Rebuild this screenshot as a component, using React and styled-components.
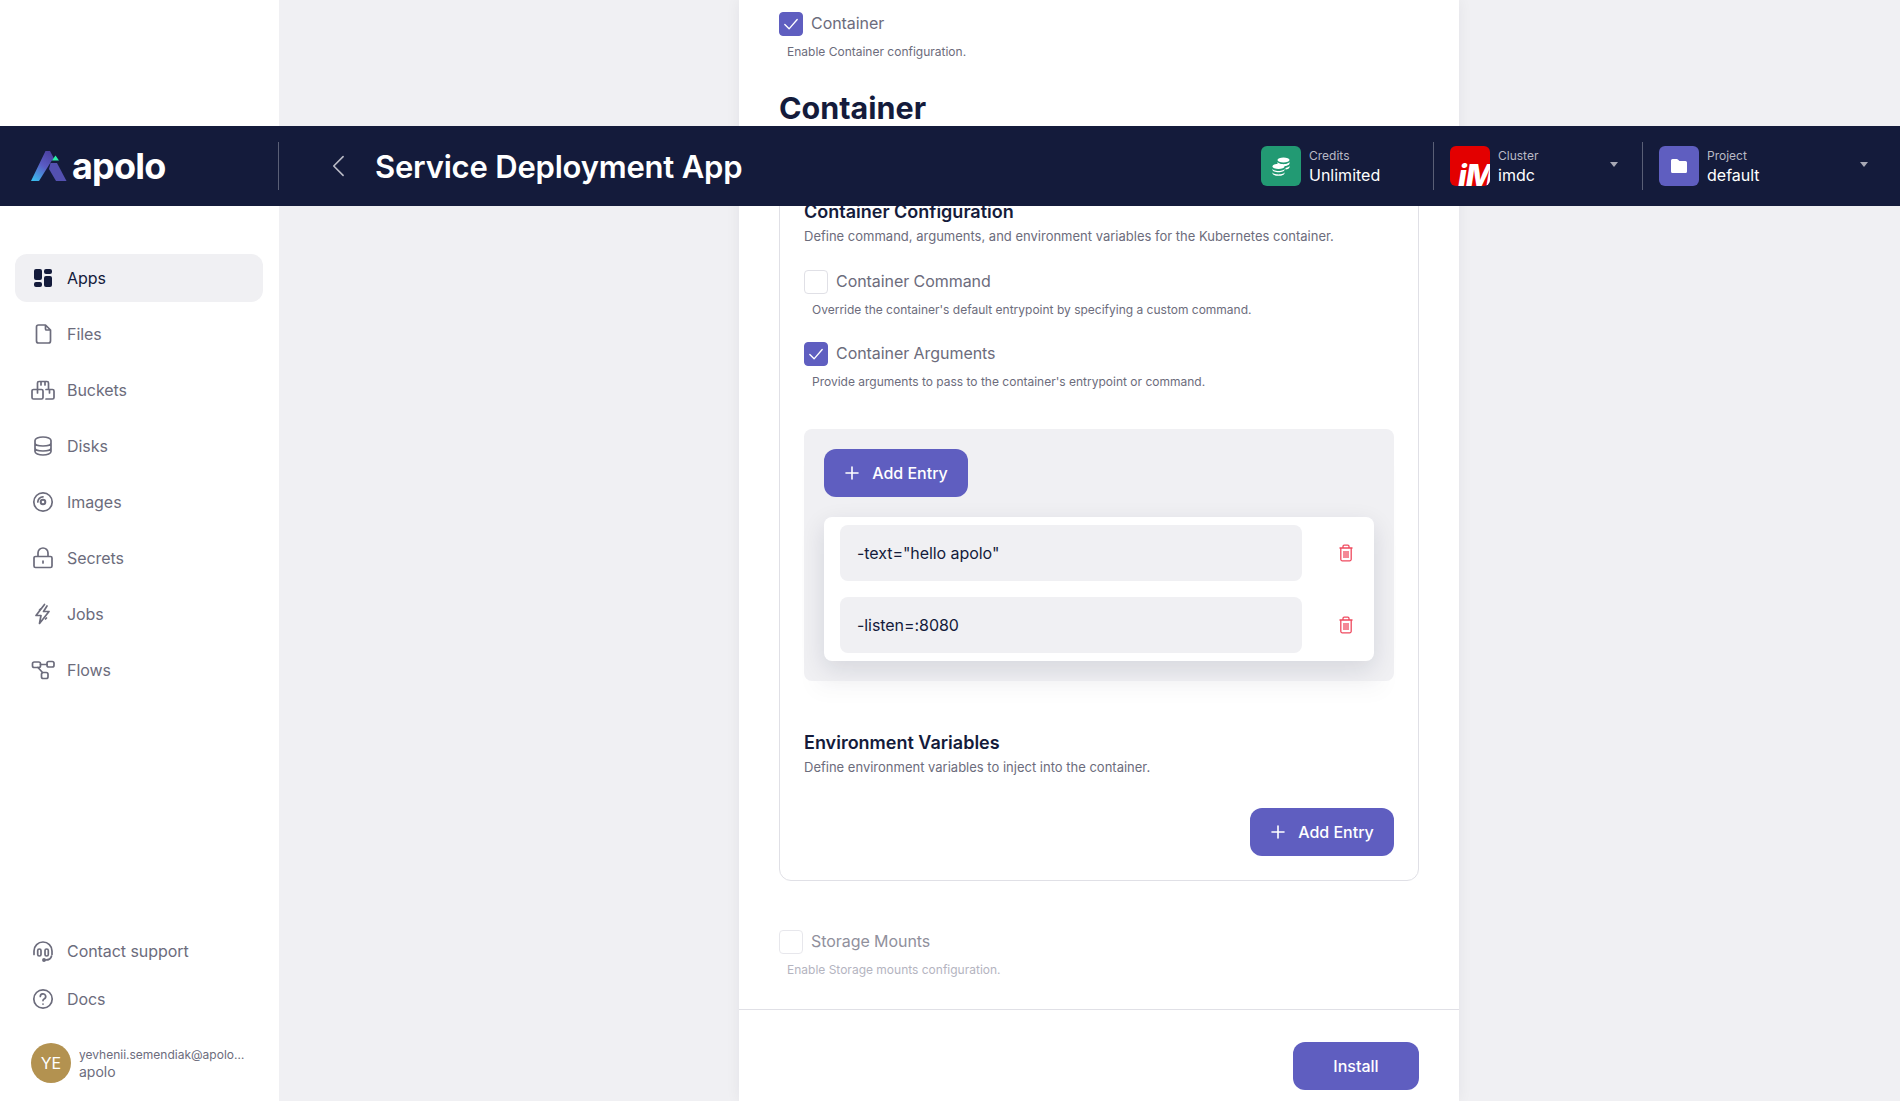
import React from 'react';
import styled, { createGlobalStyle } from 'styled-components';

const GlobalStyle = createGlobalStyle`
    html, body {
        margin: 0;
        padding: 0;
        height: 100%;
        overflow: hidden;
        background: #f0f0f3;
        font-family: Inter, "Liberation Sans", sans-serif;
    }
    * {
        box-sizing: border-box;
    }
`;

const navy = '#141b3b';
const gray = '#6c6c7c';
const accent = '#5f5ec0';

const Page = styled.div`
    position: relative;
    display: flex;
    width: 1900px;
    height: 1101px;
    overflow: hidden;
`;

const Sidebar = styled.aside`
    display: flex;
    flex-direction: column;
    width: 279px;
    flex: none;
    background: #fff;
    padding: 254px 16px 18px 15px;
`;

const NavList = styled.nav`
    display: flex;
    flex-direction: column;
    gap: ${({ $gap }) => $gap}px;
    margin-top: ${({ $push }) => ($push ? 'auto' : '0')};
`;

const NavItem = styled.div`
    display: flex;
    align-items: center;
    gap: 12px;
    height: ${({ $short }) => ($short ? 40 : 48)}px;
    padding-left: 16px;
    border-radius: 12px;
    font-size: 16px;
    line-height: 24px;
    letter-spacing: -0.06px;
    color: ${({ $active }) => ($active ? navy : gray)};
    background: ${({ $active }) => ($active ? '#f0f0f3' : 'transparent')};
`;

const UserRow = styled.div`
    display: flex;
    align-items: center;
    gap: 8px;
    margin: 24px 0 0 16px;
`;

const Avatar = styled.div`
    display: flex;
    align-items: center;
    justify-content: center;
    width: 40px;
    height: 40px;
    border-radius: 50%;
    background: #b39250;
    color: #fff;
    font-size: 16px;
`;

const UserText = styled.div`
    display: flex;
    flex-direction: column;
    color: ${gray};
    width: 168px;
`;

const UserEmail = styled.span`
    font-size: 12px;
    line-height: 17px;
    white-space: nowrap;
    overflow: hidden;
    text-overflow: ellipsis;
`;

const UserOrg = styled.span`
    font-size: 14px;
    line-height: 17px;
`;

const Main = styled.main`
    flex: 1;
    height: 1101px;
    overflow: hidden;
`;

const Panel = styled.section`
    display: flex;
    flex-direction: column;
    width: 720px;
    height: 1101px;
    margin-left: 460px;
    padding-top: 12px;
    background: #fff;
    box-shadow: 0 0 14px rgba(20, 27, 59, 0.06);
`;

const PanelBody = styled.div`
    flex: 1;
    padding: 0 40px;
`;

const CheckRow = styled.label`
    display: flex;
    align-items: center;
    gap: 8px;
    height: 24px;
    font-size: 16px;
    letter-spacing: -0.06px;
    color: ${gray};
    opacity: ${({ $disabled }) => ($disabled ? 0.75 : 1)};
`;

const CheckLabel = styled.span`
    line-height: 24px;
    margin-bottom: 2px;
`;

const Box = styled.span`
    display: flex;
    align-items: center;
    justify-content: center;
    width: 24px;
    height: 24px;
    flex: none;
    border-radius: 4px;
    background: ${({ $checked }) => ($checked ? accent : '#fff')};
    border: 1px solid ${({ $checked }) => ($checked ? accent : '#e0e0e6')};
`;

const Hint = styled.p`
    margin: 8px 0 0 8px;
    font-size: 12px;
    line-height: 16px;
    color: ${({ $disabled }) => ($disabled ? '#b4b4bf' : gray)};
`;

const PageHeading = styled.h2`
    margin: 28px 0 0;
    font-size: 30.5px;
    line-height: 40px;
    font-weight: 700;
    color: ${navy};
`;

const Card = styled.div`
    margin-top: 47px;
    padding: 24px;
    height: 706px;
    border: 1px solid #e0e0e6;
    border-radius: 12px;
`;

const CardTitle = styled.h3`
    margin: 0;
    font-size: 18px;
    line-height: 24px;
    font-weight: 600;
    color: ${navy};
`;

const CardText = styled.p`
    margin: 4px 0 0;
    font-size: 13px;
    line-height: 16px;
    color: ${gray};
`;

const OptionGroup = styled.div`
    margin-top: ${({ $top }) => $top}px;
`;

const EntryBox = styled.div`
    margin-top: 39px;
    padding: 20px;
    background: #f0f0f3;
    border-radius: 8px;
    box-shadow: 0 20px 20px -10px rgba(20, 27, 59, 0.03);
`;

const Button = styled.button`
    display: flex;
    align-items: center;
    justify-content: center;
    gap: 12px;
    width: ${({ $width }) => $width}px;
    height: 48px;
    border: none;
    border-radius: 12px;
    background: ${accent};
    color: #fff;
    font: 500 16px/24px Inter, "Liberation Sans", sans-serif;
`;

const EntryList = styled.div`
    display: flex;
    flex-direction: column;
    gap: 16px;
    margin-top: 20px;
    padding: 8px 16px;
    background: #fff;
    border-radius: 8px;
    box-shadow: 0 8px 24px rgba(20, 27, 59, 0.12);
`;

const EntryRow = styled.div`
    display: flex;
    align-items: center;
    justify-content: space-between;
`;

const EntryInput = styled.div`
    display: flex;
    align-items: center;
    width: 462px;
    height: 56px;
    padding-left: 17px;
    border-radius: 8px;
    background: #f0f0f3;
    color: ${navy};
    font-size: 16px;
    letter-spacing: -0.06px;
`;

const TrashButton = styled.span`
    display: flex;
    margin-right: 4px;
    color: #ef4a5f;
`;

const SectionBlock = styled.div`
    margin-top: 50px;
`;

const EndRow = styled.div`
    display: flex;
    justify-content: flex-end;
    margin-top: ${({ $top }) => $top}px;
`;

const PanelFooter = styled.footer`
    display: flex;
    justify-content: flex-end;
    height: 92px;
    padding: 32px 40px 0;
    border-top: 1px solid #e0e0e6;
`;

const Header = styled.header`
    position: absolute;
    top: 126px;
    left: 0;
    right: 0;
    display: flex;
    align-items: center;
    height: 80px;
    background: ${navy};
`;

const LogoCell = styled.div`
    display: flex;
    align-items: center;
    gap: 5px;
    width: 279px;
    height: 48px;
    padding-left: 31px;
    border-right: 1px solid rgba(255, 255, 255, 0.3);
`;

const LogoWord = styled.span`
    font-size: 36px;
    line-height: 40px;
    font-weight: 700;
    letter-spacing: -0.8px;
    color: #fff;
`;

const BackButton = styled.span`
    display: flex;
    margin-left: 46px;
    color: #b9bac5;
`;

const Title = styled.h1`
    margin: 2px 0 0 22px;
    font-size: 31px;
    line-height: 40px;
    font-weight: 600;
    letter-spacing: -0.2px;
    color: #fff;
    white-space: nowrap;
`;

const HeaderRight = styled.div`
    display: flex;
    margin-left: auto;
    margin-right: 8px;
`;

const HeaderCell = styled.div`
    display: flex;
    align-items: center;
    gap: 8px;
    width: ${({ $width }) => $width}px;
    height: 48px;
    padding: 0 24px 0 16px;
    border-left: ${({ $divider }) => ($divider ? '1px solid rgba(255, 255, 255, 0.3)' : 'none')};
`;

const CellIcon = styled.div`
    display: flex;
    align-items: center;
    justify-content: center;
    width: 40px;
    height: 40px;
    flex: none;
    border-radius: 6px;
    overflow: hidden;
    background: ${({ $bg }) => $bg};
    color: #fff;
`;

const ClusterIcon = styled(CellIcon)`
    align-items: flex-end;
    justify-content: flex-start;
`;

const ClusterMark = styled.span`
    margin: 0 0 -5px 8px;
    font-size: 31px;
    line-height: 31px;
    font-weight: 800;
    font-style: italic;
    letter-spacing: -1px;
    white-space: nowrap;
`;

const CellText = styled.div`
    display: flex;
    flex: 1;
    flex-direction: column;
`;

const CellLabel = styled.span`
    font-size: 12px;
    line-height: 18px;
    color: #b9bac5;
`;

const CellValue = styled.span`
    font-size: 16px;
    line-height: 22px;
    margin-top: -1px;
    color: #fff;
`;

const Caret = styled.span`
    width: 0;
    height: 0;
    margin-bottom: 4px;
    border-left: 4.5px solid transparent;
    border-right: 4.5px solid transparent;
    border-top: 5px solid #a8a9b5;
`;

function Icon({ size = 24, children, fill = 'none', strokeWidth = 1.7 }) {
    return (
        <svg
            width={size}
            height={size}
            viewBox="0 0 24 24"
            fill={fill}
            stroke="currentColor"
            strokeWidth={strokeWidth}
            strokeLinecap="round"
            strokeLinejoin="round"
        >
            {children}
        </svg>
    );
}

const navIcons = {
    apps: (
        <g fill="currentColor" stroke="none">
            <rect x="3" y="3" width="8" height="11" rx="2" />
            <rect x="13" y="3" width="8" height="5" rx="2" />
            <rect x="3" y="16" width="8" height="5" rx="2" />
            <rect x="13" y="10" width="8" height="11" rx="2" />
        </g>
    ),
    files: <path d="M7.500 3h7l5 5v11a2 2 0 0 1-2 2h-10a2 2 0 0 1-2-2V5a2 2 0 0 1 2-2ZM14.500 3v4a1 1 0 0 0 1 1h4" />,
    buckets: (
        <path d="M6.500 11.500V5a1.500 1.500 0 0 1 1.500-1.500h8A1.500 1.500 0 0 1 17.500 5v6.500M10 3.500V7M14 3.500V7M2.500 11.500h8A1.500 1.500 0 0 1 12 13v6.500a1.500 1.500 0 0 1-1.500 1.500h-8A1.500 1.500 0 0 1 1 19.500V13a1.500 1.500 0 0 1 1.500-1.500ZM6.500 11.500V15M15 11.500h6.500A1.500 1.500 0 0 1 23 13v6.500a1.500 1.500 0 0 1-1.500 1.500H15M18.500 11.500V15" />
    ),
    disks: (
        <path d="M4 6.500C4 4.500 7.500 3 12 3s8 1.500 8 3.500v11c0 2-3.500 3.500-8 3.500s-8-1.500-8-3.500ZM4 9c0 1.800 3.500 3 8 3s8-1.200 8-3M4 14c0 1.800 3.500 3 8 3s8-1.200 8-3" />
    ),
    images: (
        <>
            <circle cx="12" cy="12" r="9.200" />
            <circle cx="12" cy="12" r="2.300" strokeWidth="2" />
            <path d="M6.800 12A5.200 5.200 0 0 1 12 6.800" />
        </>
    ),
    secrets: (
        <path d="M4.500 10.500h15a1.500 1.500 0 0 1 1.500 1.500v8a1.500 1.500 0 0 1-1.500 1.500h-15A1.500 1.500 0 0 1 3 20v-8a1.500 1.500 0 0 1 1.500-1.500ZM7 10.500V7a5 5 0 0 1 10 0v3.500M12 15v2" />
    ),
    jobs: <path d="M13.500 2.500 5 13.500h5l-1.500 8 9.500-12h-5.500l3.500-5.500M9.500 7l-1 1M15.500 16l-1 1" />,
    flows: (
        <>
            <rect x="1.500" y="4" width="8" height="5.500" rx="1.800" />
            <rect x="16" y="3.500" width="7" height="5.500" rx="1.800" />
            <rect x="10.500" y="14.500" width="6.500" height="6" rx="1.800" />
            <path d="M9.500 6.500H16M7 9.500l4.500 5" />
        </>
    ),
    support: (
        <>
            <path d="M3 15.500V12a9 9 0 0 1 18 0v3.500" />
            <rect x="6.700" y="10" width="3.300" height="7" rx="1.600" />
            <rect x="14" y="10" width="3.300" height="7" rx="1.600" />
            <path d="M20.500 17c-.5 2.500-2.500 4-6 4" />
            <circle cx="13" cy="21" r="1.100" fill="currentColor" />
        </>
    ),
    docs: (
        <>
            <circle cx="12" cy="12" r="9.200" />
            <path d="M9.300 9.500a2.700 2.700 0 1 1 3.800 2.500c-.7.300-1.100.900-1.100 1.600" />
            <path d="M12 17v.1" />
        </>
    ),
};

const mainNav = [
    ['apps', 'Apps'],
    ['files', 'Files'],
    ['buckets', 'Buckets'],
    ['disks', 'Disks'],
    ['images', 'Images'],
    ['secrets', 'Secrets'],
    ['jobs', 'Jobs'],
    ['flows', 'Flows'],
];

function Check({ checked }) {
    return (
        <Box $checked={checked}>
            {checked && (
                <svg width="18" height="18" viewBox="0 0 16 16" fill="none" stroke="#fff" strokeWidth="1.200" strokeLinecap="round" strokeLinejoin="round">
                    <path d="M2.500 8.500 6.300 12.300 13.500 4" />
                </svg>
            )}
        </Box>
    );
}

function Plus() {
    return (
        <svg width="16" height="16" viewBox="0 0 16 16" fill="none" stroke="#fff" strokeWidth="1.600" strokeLinecap="round">
            <path d="M8 2v12M2 8h12" />
        </svg>
    );
}

function Trash() {
    return (
        <svg width="16" height="18" viewBox="0 0 16 18" fill="none" stroke="currentColor" strokeWidth="1.300" strokeLinejoin="round">
            <path d="M1.500 4h13M5 4V2.400A1.200 1.200 0 0 1 6.200 1.200h3.600A1.200 1.200 0 0 1 11 2.400V4M2.800 4v11.300a1.500 1.500 0 0 0 1.500 1.500h7.400a1.500 1.500 0 0 0 1.500-1.500V4M6 7v7M8 7v7M10 7v7" />
        </svg>
    );
}

function Logo() {
    return (
        <svg width="36" height="32" viewBox="0 0 36 32">
            <defs>
                <linearGradient id="logoLeg" x1="0" y1="31" x2="20" y2="2" gradientUnits="userSpaceOnUse">
                    <stop offset="0" stopColor="#37c5f3" />
                    <stop offset="0.55" stopColor="#5a5cc4" />
                    <stop offset="1" stopColor="#4b3fa0" />
                </linearGradient>
            </defs>
            <path d="M14.500 1h4.500l4 7.500-2.500 2.500L8 31H0Z" fill="url(#logoLeg)" />
            <path d="M19.500 13h6.500l9.500 18H25L18 19Z" fill="#5350b0" />
            <path d="M24.500 5.500 28 10.500H21Z" fill="#2bf0a8" />
        </svg>
    );
}

function CoinsIcon() {
    return (
        <svg width="20" height="20" viewBox="0 0 20 20" fill="#fff">
            <ellipse cx="12.500" cy="4" rx="6" ry="2.600" />
            <path d="M6.500 5.600c0 1.500 2.700 2.600 6 2.600s6-1.100 6-2.600v1.800c0 1.400-2.700 2.600-6 2.600s-6-1.200-6-2.600Z" />
            <ellipse cx="7.500" cy="10.400" rx="6" ry="2.600" />
            <path d="M1.500 12.400c0 1.500 2.700 2.500 6 2.500s6-1 6-2.500v1.400c0 1.400-2.700 2.500-6 2.500s-6-1.100-6-2.500Z" />
            <path d="M1.500 16c0 1.500 2.700 2.400 6 2.400s6-.9 6-2.400v1.200c0 1.500-2.700 2.600-6 2.600s-6-1.100-6-2.600Z" />
            <path d="M14.500 12c2.300-.3 4-1.200 4-2.400v1.600c0 1.200-1.700 2.200-4 2.400Z" />
        </svg>
    );
}

function FolderIcon() {
    return (
        <svg width="20" height="20" viewBox="0 0 20 20" fill="#fff">
            <path d="M3.500 3h4.200c.5 0 .9.2 1.200.5L10.500 5h6a1.500 1.500 0 0 1 1.500 1.500v9a1.500 1.500 0 0 1-1.500 1.500h-13A1.500 1.500 0 0 1 2 15.500v-11A1.500 1.500 0 0 1 3.500 3Z" />
        </svg>
    );
}

function Entry({ value }) {
    return (
        <EntryRow>
            <EntryInput>{value}</EntryInput>
            <TrashButton>
                <Trash />
            </TrashButton>
        </EntryRow>
    );
}

function Option({ checked, disabled, label }) {
    return (
        <CheckRow $disabled={disabled}>
            <Check checked={checked} />
            <CheckLabel>{label}</CheckLabel>
        </CheckRow>
    );
}

export default function App() {
    return (
        <Page>
            <GlobalStyle />
            <Sidebar>
                <NavList $gap={8}>
                    {mainNav.map(([icon, label], i) => (
                        <NavItem key={icon} $active={i === 0}>
                            <Icon>{navIcons[icon]}</Icon>
                            {label}
                        </NavItem>
                    ))}
                </NavList>
                <NavList $gap={8} $push>
                    <NavItem $short>
                        <Icon>{navIcons.support}</Icon>
                        Contact support
                    </NavItem>
                    <NavItem $short>
                        <Icon>{navIcons.docs}</Icon>
                        Docs
                    </NavItem>
                </NavList>
                <UserRow>
                    <Avatar>YE</Avatar>
                    <UserText>
                        <UserEmail>yevhenii.semendiak@apolo.us</UserEmail>
                        <UserOrg>apolo</UserOrg>
                    </UserText>
                </UserRow>
            </Sidebar>

            <Main>
                <Panel>
                    <PanelBody>
                        <Option checked label="Container" />
                        <Hint>Enable Container configuration.</Hint>
                        <PageHeading>Container</PageHeading>

                        <Card>
                            <CardTitle>Container Configuration</CardTitle>
                            <CardText>Define command, arguments, and environment variables for the Kubernetes container.</CardText>

                            <OptionGroup $top={26}>
                                <Option label="Container Command" />
                                <Hint>Override the container's default entrypoint by specifying a custom command.</Hint>
                            </OptionGroup>
                            <OptionGroup $top={24}>
                                <Option checked label="Container Arguments" />
                                <Hint>Provide arguments to pass to the container's entrypoint or command.</Hint>
                            </OptionGroup>

                            <EntryBox>
                                <Button $width={144}>
                                    <Plus />
                                    Add Entry
                                </Button>
                                <EntryList>
                                    <Entry value={'-text="hello apolo"'} />
                                    <Entry value="-listen=:8080" />
                                </EntryList>
                            </EntryBox>

                            <SectionBlock>
                                <CardTitle>Environment Variables</CardTitle>
                                <CardText>Define environment variables to inject into the container.</CardText>
                                <EndRow $top={33}>
                                    <Button $width={144}>
                                        <Plus />
                                        Add Entry
                                    </Button>
                                </EndRow>
                            </SectionBlock>
                        </Card>

                        <OptionGroup $top={49}>
                            <Option disabled label="Storage Mounts" />
                            <Hint $disabled>Enable Storage mounts configuration.</Hint>
                        </OptionGroup>
                    </PanelBody>
                    <PanelFooter>
                        <Button $width={126}>Install</Button>
                    </PanelFooter>
                </Panel>
            </Main>

            <Header>
                <LogoCell>
                    <Logo />
                    <LogoWord>apolo</LogoWord>
                </LogoCell>
                <BackButton>
                    <Icon size={28} strokeWidth={1.400}>
                        <path d="M15.500 4 7.500 12l8 8" />
                    </Icon>
                </BackButton>
                <Title>Service Deployment App</Title>
                <HeaderRight>
                    <HeaderCell $width={188}>
                        <CellIcon $bg="#229a73">
                            <CoinsIcon />
                        </CellIcon>
                        <CellText>
                            <CellLabel>Credits</CellLabel>
                            <CellValue>Unlimited</CellValue>
                        </CellText>
                    </HeaderCell>
                    <HeaderCell $width={209} $divider>
                        <ClusterIcon $bg="#e30000">
                            <ClusterMark>iM</ClusterMark>
                        </ClusterIcon>
                        <CellText>
                            <CellLabel>Cluster</CellLabel>
                            <CellValue>imdc</CellValue>
                        </CellText>
                        <Caret />
                    </HeaderCell>
                    <HeaderCell $width={250} $divider>
                        <CellIcon $bg={accent}>
                            <FolderIcon />
                        </CellIcon>
                        <CellText>
                            <CellLabel>Project</CellLabel>
                            <CellValue>default</CellValue>
                        </CellText>
                        <Caret />
                    </HeaderCell>
                </HeaderRight>
            </Header>
        </Page>
    );
}
